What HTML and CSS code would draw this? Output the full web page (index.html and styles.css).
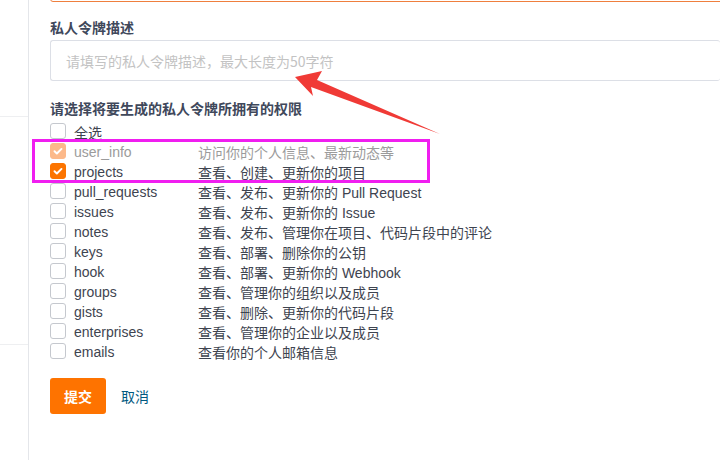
FILE: index.html
```html
<!DOCTYPE html>
<html lang="zh-CN">
<head>
<meta charset="utf-8">
<title>私人令牌</title>
<link rel="stylesheet" href="styles.css">
</head>
<body>
<div class="page">
  <aside class="sidebar">
    <div class="side-block side-a"></div>
    <div class="side-block side-b"></div>
  </aside>
  <main class="main">
    <div class="prev-input"></div>
    <div class="field">
      <label class="field-label">私人令牌描述</label>
      <div class="input"><span class="placeholder">请填写的私人令牌描述，最大长度为50字符</span></div>
    </div>
    <div class="field">
      <label class="field-label label-scopes">请选择将要生成的私人令牌所拥有的权限</label>
      <ul class="scopes">
        <li class="row"><span class="cb"></span><span class="name">全选</span></li>
        <li class="row disabled"><span class="cb checked"><svg viewBox="0 0 16 16"><path d="M4 8.3l2.7 2.6L12 5.6"/></svg></span><span class="name">user_info</span><span class="desc">访问你的个人信息、最新动态等</span></li>
        <li class="row"><span class="cb checked"><svg viewBox="0 0 16 16"><path d="M4 8.3l2.7 2.6L12 5.6"/></svg></span><span class="name">projects</span><span class="desc">查看、创建、更新你的项目</span></li>
        <li class="row"><span class="cb"></span><span class="name">pull_requests</span><span class="desc">查看、发布、更新你的 Pull Request</span></li>
        <li class="row"><span class="cb"></span><span class="name">issues</span><span class="desc">查看、发布、更新你的 Issue</span></li>
        <li class="row"><span class="cb"></span><span class="name">notes</span><span class="desc">查看、发布、管理你在项目、代码片段中的评论</span></li>
        <li class="row"><span class="cb"></span><span class="name">keys</span><span class="desc">查看、部署、删除你的公钥</span></li>
        <li class="row"><span class="cb"></span><span class="name">hook</span><span class="desc">查看、部署、更新你的 Webhook</span></li>
        <li class="row"><span class="cb"></span><span class="name">groups</span><span class="desc">查看、管理你的组织以及成员</span></li>
        <li class="row"><span class="cb"></span><span class="name">gists</span><span class="desc">查看、删除、更新你的代码片段</span></li>
        <li class="row"><span class="cb"></span><span class="name">enterprises</span><span class="desc">查看、管理你的企业以及成员</span></li>
        <li class="row"><span class="cb"></span><span class="name">emails</span><span class="desc">查看你的个人邮箱信息</span></li>
      </ul>
    </div>
    <div class="actions">
      <button class="btn-submit">提交</button>
      <a class="btn-cancel">取消</a>
    </div>
  </main>
</div>
<div class="highlight"></div>
<svg class="arrow" viewBox="0 0 720 460" width="720" height="460">
  <polygon points="295,77 322,71 317,80 440,134 311,87 313,96" fill="#f03a36"/>
</svg>
</body>
</html>
```
FILE: styles.css
```css
html, body {
  margin: 0;
  padding: 0;
  background: #fff;
}
body {
  width: 720px;
  height: 460px;
  overflow: hidden;
  position: relative;
  font-family: "Liberation Sans", "Noto Sans CJK SC", sans-serif;
  font-size: 14px;
  color: #40485b;
}
.page {
  display: flex;
  height: 460px;
}
.sidebar {
  width: 28px;
  border-right: 1px solid #e4e6ea;
  flex: none;
}
.side-block {
  border-bottom: 1px solid #eeeff1;
}
.side-a { height: 116px; }
.side-b { height: 227px; }
.main {
  flex: 1;
  padding-left: 21px;
}
.prev-input {
  height: 40px;
  margin-top: -38px;
  border: 1px solid #ef7f3e;
  border-radius: 3px;
  margin-right: -4px;
  box-sizing: border-box;
}
.field-label {
  display: block;
  font-family: "Noto Sans CJK SC", sans-serif;
  font-weight: 700;
  font-size: 14px;
  line-height: 20px;
  color: #40485b;
  margin-top: 15px;
  margin-bottom: 3px;
}
.input {
  height: 41px;
  box-sizing: border-box;
  border: 1px solid #dcdfe6;
  border-radius: 3px;
  border-right: none;
  display: flex;
  align-items: center;
  padding-left: 15px;
}
.placeholder {
  font-family: "Noto Sans CJK SC", sans-serif;
  color: #c3c3c3;
  font-size: 14px;
}
.label-scopes {
  margin-top: 17px;
  margin-bottom: 3px;
}
.scopes {
  list-style: none;
  margin: 0;
  padding: 0;
}
.row {
  height: 20px;
  display: flex;
  align-items: center;
  color: #3e4450;
}
.row.disabled { color: #9b9b9b; }
.cb {
  width: 16px;
  height: 16px;
  box-sizing: border-box;
  border: 1px solid #c5c8ce;
  border-radius: 3px;
  background: #fff;
  flex: none;
  display: flex;
  align-items: center;
  justify-content: center;
}
.cb.checked {
  background: #fc7400;
  border-color: #fc7400;
}
.disabled .cb.checked {
  background: #fcb98a;
  border-color: #fcb98a;
}
.cb svg {
  width: 16px;
  height: 16px;
}
.cb svg path {
  fill: none;
  stroke: #fff;
  stroke-width: 2.2;
  stroke-linecap: round;
  stroke-linejoin: round;
}
.name {
  margin-left: 8px;
  width: 124px;
  padding-top: 2px;
}
.desc {
  font-size: 14px;
  padding-top: 2px;
}
.actions {
  display: flex;
  align-items: center;
  margin-top: 17px;
}
.btn-submit {
  width: 56px;
  height: 36px;
  border: none;
  border-radius: 3px;
  background: #fe7300;
  color: #fff;
  font-family: "Noto Sans CJK SC", sans-serif;
  font-size: 14px;
  font-weight: 700;
  padding: 0;
}
.btn-cancel {
  margin-left: 15px;
  color: #005980;
  font-family: "Noto Sans CJK SC", sans-serif;
  font-size: 14px;
}
.highlight {
  position: absolute;
  left: 32px;
  top: 139px;
  width: 398px;
  height: 44px;
  box-sizing: border-box;
  border: 3px solid #f01ef0;
}
.arrow {
  position: absolute;
  left: 0;
  top: 0;
  pointer-events: none;
}
```
